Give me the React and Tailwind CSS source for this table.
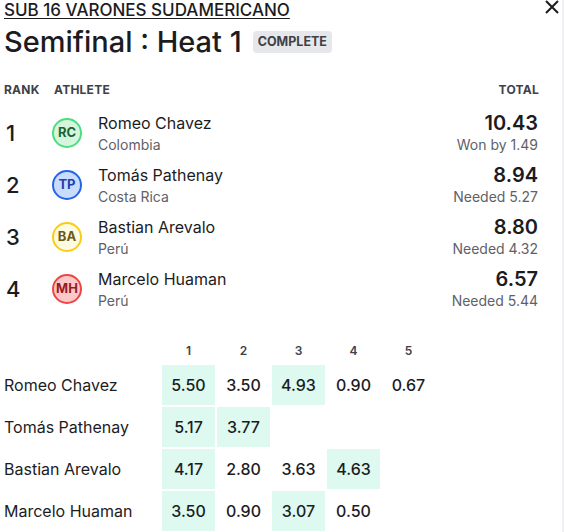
const athletes = [
  {
    rank: 1,
    initials: "RC",
    name: "Romeo Chavez",
    country: "Colombia",
    total: "10.43",
    note: "Won by 1.49",
    avatar: "bg-[#d6f5dd] border-[#4ade80] text-[#166534]",
  },
  {
    rank: 2,
    initials: "TP",
    name: "Tomás Pathenay",
    country: "Costa Rica",
    total: "8.94",
    note: "Needed 5.27",
    avatar: "bg-[#c9dcfb] border-[#2563eb] text-[#1e40af]",
  },
  {
    rank: 3,
    initials: "BA",
    name: "Bastian Arevalo",
    country: "Perú",
    total: "8.80",
    note: "Needed 4.32",
    avatar: "bg-[#fefbe3] border-[#facc15] text-[#6b5a10]",
  },
  {
    rank: 4,
    initials: "MH",
    name: "Marcelo Huaman",
    country: "Perú",
    total: "6.57",
    note: "Needed 5.44",
    avatar: "bg-[#fcc9c9] border-[#ef4444] text-[#991b1b]",
  },
];

// each wave: [score, counts]
const waves = [
  { name: "Romeo Chavez", scores: [["5.50", true], ["3.50", false], ["4.93", true], ["0.90", false], ["0.67", false]] },
  { name: "Tomás Pathenay", scores: [["5.17", true], ["3.77", true]] },
  { name: "Bastian Arevalo", scores: [["4.17", true], ["2.80", false], ["3.63", false], ["4.63", true]] },
  { name: "Marcelo Huaman", scores: [["3.50", true], ["0.90", false], ["3.07", true], ["0.50", false]] },
];

const App = () => {
  return (
    <div
      className="relative w-[564px] h-[532px] overflow-hidden bg-white border-r-2 border-[#f1f1f3] text-[#1c1c1f]"
      style={{ fontFamily: "Inter, 'Noto Sans', sans-serif" }}
    >
      {/* close */}
      <button className="absolute top-0 left-[545px] text-[#1c1c1f]">
        <svg width="14" height="14" viewBox="0 0 14 14" fill="none">
          <path d="M1 1L13 13M13 1L1 13" stroke="currentColor" strokeWidth="2" />
        </svg>
      </button>

      <div className="pl-1 pr-[23px]">
        <div className="text-[17px] leading-[20px] font-medium underline underline-offset-2 uppercase">
          Sub 16 Varones Sudamericano
        </div>
        <div className="flex items-center gap-[11px] mt-[4px]">
          <h1 className="text-[29px] leading-[36px] font-medium">Semifinal : Heat 1</h1>
          <span className="bg-[#e6e7ea] rounded-[4px] px-[5px] py-[3px] text-[12.5px] leading-[16px] font-bold text-[#3f4148] uppercase">
            Complete
          </span>
        </div>

        {/* results */}
        <div className="mt-[22px] flex items-center text-[12px] leading-[16px] font-bold tracking-[0.02em] text-[#3f4148] uppercase">
          <div className="w-[50px]">Rank</div>
          <div className="flex-1">Athlete</div>
          <div>Total</div>
        </div>
        <div className="mt-[9px]">
          {athletes.map((a) => (
            <div key={a.rank} className="flex items-center py-1">
              <div className="w-[48px] pl-[2px] text-[22px] leading-[28px] font-medium">{a.rank}</div>
              <div
                className={`w-[30px] h-[30px] rounded-full border-2 flex items-center justify-center text-[13px] font-bold ${a.avatar}`}
              >
                {a.initials}
              </div>
              <div className="flex-1 ml-4">
                <div className="text-[16px] leading-[24px]">{a.name}</div>
                <div className="text-[14px] leading-[20px] text-[#5f6168]">{a.country}</div>
              </div>
              <div className="text-right pr-[1px]">
                <div className="text-[20px] leading-[24px] font-semibold">{a.total}</div>
                <div className="text-[14px] leading-[20px] text-[#5f6168]">{a.note}</div>
              </div>
            </div>
          ))}
        </div>

        {/* waves */}
        <div className="mt-[24px] grid grid-cols-[156px_repeat(5,53px)] gap-[2px] items-center">
          <div className="h-[24px]"></div>
          {[1, 2, 3, 4, 5].map((n) => (
            <div key={n} className="h-[24px] flex items-center justify-center text-[12px] font-semibold text-[#3f4148]">
              {n}
            </div>
          ))}
          {waves.map((w) => (
            <div key={w.name} className="contents">
              <div className="h-[40px] flex items-center text-[16px]">{w.name}</div>
              {[0, 1, 2, 3, 4].map((i) => {
                const s = w.scores[i];
                return (
                  <div
                    key={i}
                    className={`h-[40px] flex items-center justify-center text-[16px] font-medium ${
                      s && s[1] ? "bg-[#ddf9f0]" : ""
                    }`}
                  >
                    {s ? s[0] : ""}
                  </div>
                );
              })}
            </div>
          ))}
        </div>
      </div>
    </div>
  );
};

export default App;
